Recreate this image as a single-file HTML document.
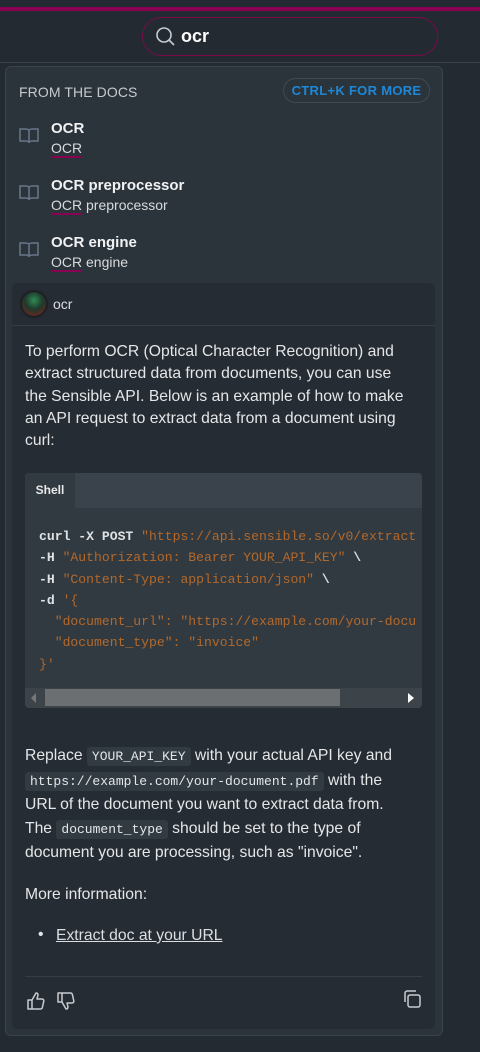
<!DOCTYPE html>
<html><head><meta charset="utf-8"><style>
*{box-sizing:border-box;margin:0;padding:0}
body{width:480px;height:1052px;background:#242a31;font-family:"Liberation Sans",sans-serif;color:#e6e8ea;position:relative;overflow:hidden}
.bar{position:absolute;left:0;top:7px;width:480px;height:4px;background:#8a0052}
.hline{position:absolute;left:0;top:62px;width:480px;height:1px;background:#3a4148}
.search{position:absolute;left:142px;top:17px;width:296px;height:39px;border:1px solid #7a0a4a;border-radius:20px}
.search .q{position:absolute;left:38px;top:8px;font-size:18px;font-weight:bold;color:#fff}
.panel{position:absolute;left:5px;top:66px;width:438px;height:970px;background:#2c343b;border:1px solid #3b444c;border-radius:6px}
.hdr{position:absolute;left:13px;top:17px;font-size:14px;color:#c6cacd;letter-spacing:0.1px}
.ctrl{position:absolute;left:277px;top:11px;width:147px;height:25px;border:1px solid #3e4952;border-radius:13px;color:#1e88d8;font-weight:bold;font-size:13px;text-align:center;line-height:23px;letter-spacing:0.3px}
.item{position:absolute;left:13px}
.item .t{position:absolute;left:32px;top:0;font-size:15px;font-weight:bold;color:#f0f2f3;white-space:nowrap}
.item .s{position:absolute;left:32px;top:20px;font-size:14px;color:#d8dbdd;white-space:nowrap}
.item .s u{text-decoration:none;border-bottom:2px solid #8a0052}
.item svg{position:absolute;left:0;top:7px}
.card{position:absolute;left:6px;top:216px;width:423px;height:746px;background:#262c33;border-radius:5px}
.ch{height:43px;border-bottom:1px solid #363e45;position:relative}
.av{position:absolute;left:10px;top:9px;width:24px;height:24px;border-radius:50%;background:radial-gradient(circle at 50% 35%,#2f8a55 0,#1e3a2c 45%,#5a2a24 75%,#1b1f24 100%);box-shadow:0 0 3px #000}
.ch span{position:absolute;left:41px;top:13px;font-size:14px;color:#dde}
.p{position:absolute;left:13px;width:392px;font-size:15.7px;line-height:22.3px;color:#e4e6e8}
.code{position:absolute;left:13px;top:190px;width:397px;height:235px;background:#313a41;border-radius:4px;overflow:hidden}
.tabs{height:35px;background:#3a434b;position:relative}
.tab{position:absolute;left:0;top:0;width:50px;height:35px;background:#313a41;font-size:12px;font-weight:bold;color:#e8e8e8;text-align:center;line-height:35px}
pre{position:absolute;left:14px;top:53px;font-family:"Liberation Mono",monospace;font-size:13.1px;line-height:21.3px;color:#dfe2e4;font-weight:bold;white-space:pre}
pre i{font-style:normal;color:#b4682a;font-weight:normal}
.sb{position:absolute;left:0;top:215px;width:397px;height:20px;background:#3c4349}
.thumb{position:absolute;left:20px;top:1px;width:295px;height:17px;background:#6b6f72}
.c{font-family:"Liberation Mono",monospace;font-size:13px;background:#323b42;padding:2px 5px;border-radius:3px}
.foot{position:absolute;left:13px;top:693px;width:397px;height:1px;background:#363e45}
</style></head><body>
<div class="bar"></div>
<div class="hline"></div>
<div class="search">
<svg style="position:absolute;left:12px;top:8px" width="22" height="22" viewBox="0 0 22 22" fill="none" stroke="#c8ccd0" stroke-width="1.6"><circle cx="9" cy="9" r="7"/><path d="M14 14l5 5"/></svg>
<span class="q">ocr</span></div>
<div class="panel">
<div class="hdr">FROM THE DOCS</div>
<div class="ctrl">CTRL+K FOR MORE</div>
<div class="item" style="top:53px"><svg width="20" height="18" viewBox="0 0 20 18" fill="none" stroke="#66768a" stroke-width="1.5"><path d="M1 2h6c2 0 3 1 3 2v12c0-1-1-2-3-2H1zM19 2h-6c-2 0-3 1-3 2v12c0-1 1-2 3-2h6z"/></svg><div class="t">OCR</div><div class="s"><u>OCR</u></div></div>
<div class="item" style="top:110px"><svg width="20" height="18" viewBox="0 0 20 18" fill="none" stroke="#66768a" stroke-width="1.5"><path d="M1 2h6c2 0 3 1 3 2v12c0-1-1-2-3-2H1zM19 2h-6c-2 0-3 1-3 2v12c0-1 1-2 3-2h6z"/></svg><div class="t">OCR preprocessor</div><div class="s"><u>OCR</u> preprocessor</div></div>
<div class="item" style="top:167px"><svg width="20" height="18" viewBox="0 0 20 18" fill="none" stroke="#66768a" stroke-width="1.5"><path d="M1 2h6c2 0 3 1 3 2v12c0-1-1-2-3-2H1zM19 2h-6c-2 0-3 1-3 2v12c0-1 1-2 3-2h6z"/></svg><div class="t">OCR engine</div><div class="s"><u>OCR</u> engine</div></div>
<div class="card">
<div class="ch"><div class="av"></div><span>ocr</span></div>
<div class="p" style="top:58px">To perform OCR (Optical Character Recognition) and<br>extract structured data from documents, you can use<br>the Sensible API. Below is an example of how to make<br>an API request to extract data from a document using<br>curl:</div>
<div class="code"><div class="tabs"><div class="tab">Shell</div></div>
<pre>curl -X POST <i>"https://api.sensible.so/v0/extract</i>
-H <i>"Authorization: Bearer YOUR_API_KEY"</i> \
-H <i>"Content-Type: application/json"</i> \
-d <i>'{</i>
<i>  "document_url": "https://example.com/your-docu</i>
<i>  "document_type": "invoice"</i>
<i>}'</i></pre>
<div class="sb"><svg style="position:absolute;left:6px;top:5px" width="6" height="10"><path d="M5 0v10L0 5z" fill="#777"/></svg><div class="thumb"></div><svg style="position:absolute;left:383px;top:5px" width="6" height="10"><path d="M0 0v10l6-5z" fill="#fff"/></svg></div>
</div>
<div class="p" style="top:461px;line-height:23.5px;width:400px">Replace <span class="c">YOUR_API_KEY</span> with your actual API key and<br><span class="c">https://example.com/your-document.pdf</span> with the<br>URL of the document you want to extract data from.<br>The <span class="c">document_type</span> should be set to the type of<br>document you are processing, such as "invoice".</div>
<div class="p" style="top:601px">More information:</div>
<div class="p" style="top:642px;left:30px"><span style="position:absolute;left:-4px;top:-1px">•</span><span style="position:absolute;left:14px;text-decoration:underline;color:#dcdfe2;white-space:nowrap">Extract doc at your URL</span></div>
<div class="foot"></div>
<svg style="position:absolute;left:14px;top:708px" width="20" height="20" viewBox="0 0 20 20" fill="none" stroke="#c8ccd0" stroke-width="1.5" stroke-linejoin="round"><path d="M2 9h4v9H2zM6 9l4-7c1.5 0 2 1 2 2l-1 4h5c1.2 0 2 1 1.8 2l-1.3 6c-.2 1-1 2-2 2H6"/></svg>
<svg style="position:absolute;left:44px;top:708px" width="20" height="20" viewBox="0 0 20 20" fill="none" stroke="#c8ccd0" stroke-width="1.5" stroke-linejoin="round"><path d="M2 11h4V2H2zM6 11l4 7c1.5 0 2-1 2-2l-1-4h5c1.2 0 2-1 1.8-2l-1.3-6c-.2-1-1-2-2-2H6"/></svg>
<svg style="position:absolute;left:390px;top:706px" width="20" height="20" viewBox="0 0 20 20" fill="none" stroke="#c8ccd0" stroke-width="1.5"><rect x="6" y="6" width="12" height="12" rx="2"/><path d="M3 13V4c0-1 1-2 2-2h9"/></svg>
</div>
</div>
</body></html>
